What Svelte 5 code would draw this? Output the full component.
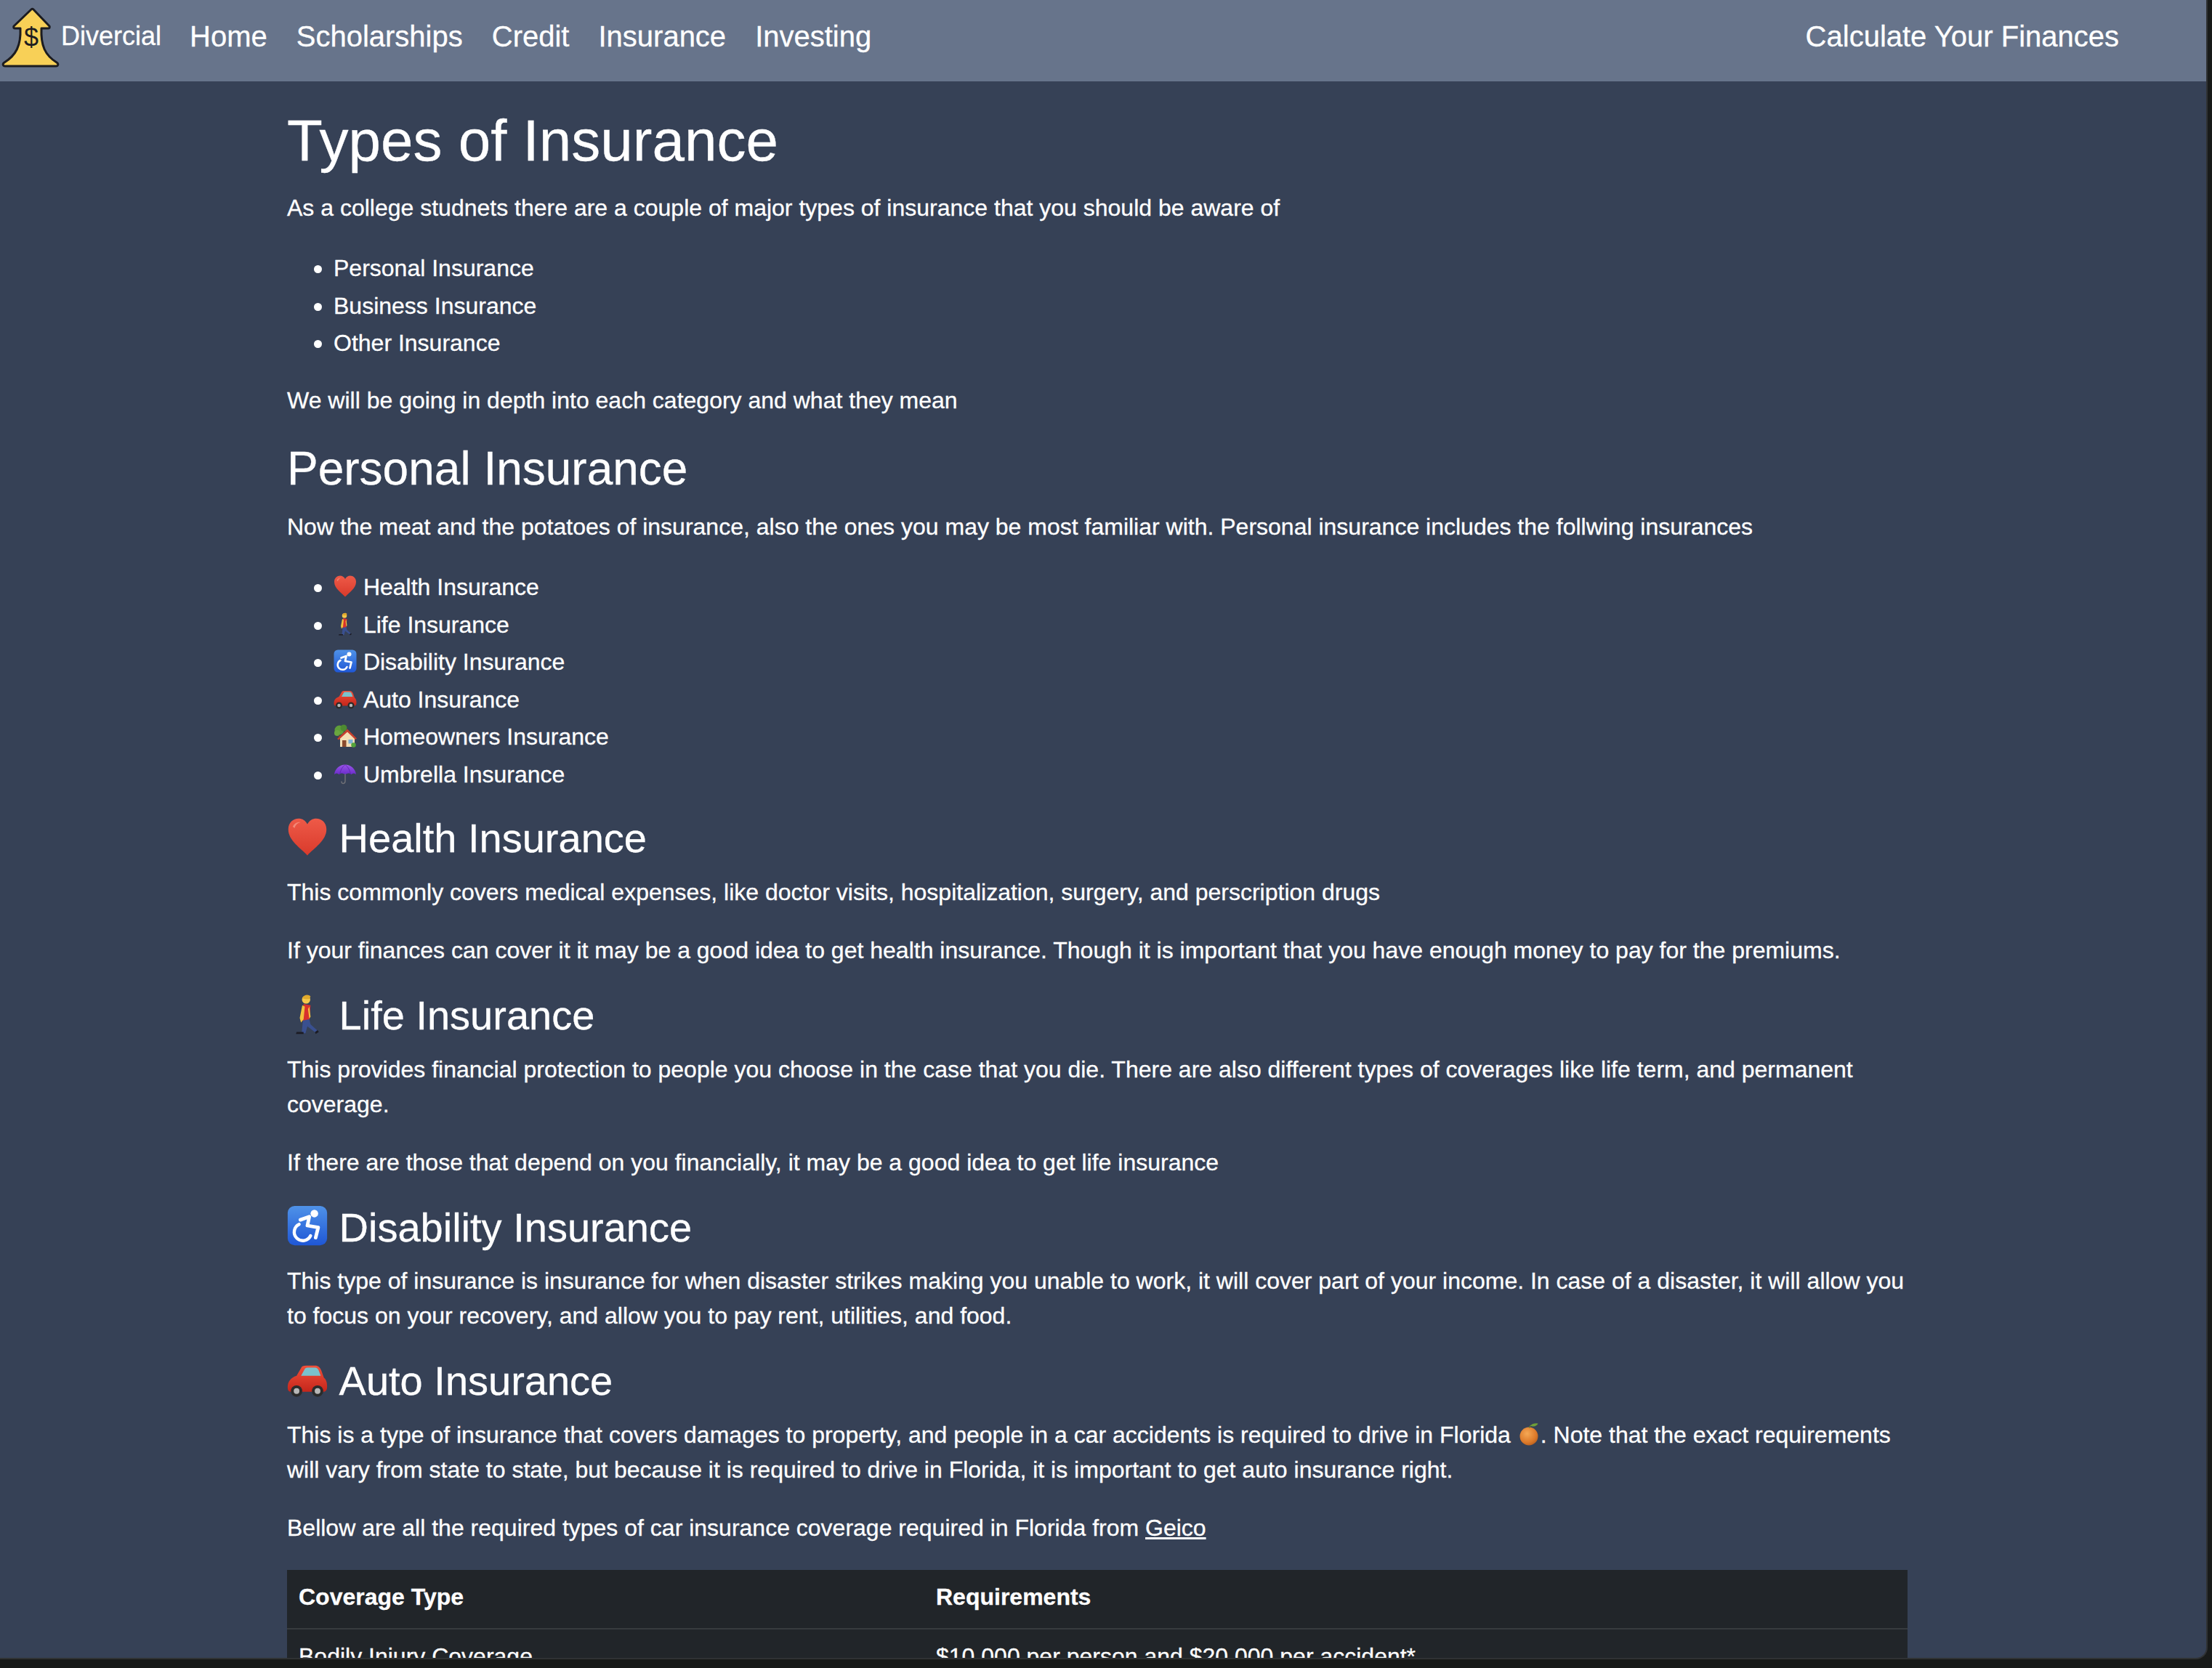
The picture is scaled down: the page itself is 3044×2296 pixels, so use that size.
<script lang="ts">
  const navLinks = ['Home', 'Scholarships', 'Credit', 'Insurance', 'Investing'];
  const overviewTypes = ['Personal Insurance', 'Business Insurance', 'Other Insurance'];
  const personalTypes = [
    { emoji: 'heart', label: 'Health Insurance' },
    { emoji: 'walker', label: 'Life Insurance' },
    { emoji: 'wheelchair', label: 'Disability Insurance' },
    { emoji: 'car', label: 'Auto Insurance' },
    { emoji: 'house', label: 'Homeowners Insurance' },
    { emoji: 'umbrella', label: 'Umbrella Insurance' }
  ];
</script>

{#snippet emoji(kind: string)}
  <svg class="emoji" class:orange={kind === 'orange'} viewBox="0 0 64 64" aria-hidden="true">
    {#if kind === 'heart'}
      <path d="M32 61C22 50 2 38 2 20 2 9 10 3 18 3c6 0 11 3 14 9 3-6 8-9 14-9 8 0 16 6 16 17 0 18-20 30-30 41z" fill="url(#heartFill)" />
      <path d="M9 16c2-5 7-8 12-7-5 1-8 4-9 9z" fill="#f7a08f" opacity="0.7" />
    {:else if kind === 'walker'}
      <path d="M26 16l-3 24 4 5 8-2 2-25z" fill="#d8312c" />
      <path d="M24 18l-4 20 2 7 4-5 2-20zM35 20l2 16-2 3-2-15z" fill="#f2c23e" />
      <path d="M25 42l10-2 2 8 11 10-3 3-13-10-3 11h-6z" fill="#3a5090" />
      <path d="M15 60h11v3H14zM44 60l4-3 2 3-5 3z" fill="#1c1c24" />
      <circle cx="30" cy="9" r="6.500" fill="#f6c94a" />
      <path d="M24 7c2-6 10-7 13-3l-2 4c-4 1-7 0-11-1z" fill="#e0a92c" />
    {:else if kind === 'wheelchair'}
      <rect x="1" y="1" width="62" height="62" rx="11" fill="url(#chairFill)" />
      <circle cx="43" cy="13" r="6" fill="#fff" />
      <path d="M21 23l14-5-3 14 17 3-4 16" fill="none" stroke="#fff" stroke-width="5.5" stroke-linecap="round" stroke-linejoin="round" />
      <path d="M19 30a13.500 13.500 0 1 0 18 18" fill="none" stroke="#fff" stroke-width="5" stroke-linecap="round" />
    {:else if kind === 'car'}
      <path d="M15 26l7-12c1-3 4-4 8-4h14c5 0 8 3 10 8l4 11c4 3 5 8 5 14 0 5-2 8-6 8H6c-4 0-5-3-5-7 0-9 5-15 14-18z" fill="url(#carFill)" />
      <path d="M22 26l6-11c1-1 2-2 4-2h12c3 0 5 2 6 5l3 8z" fill="#7bc2cc" />
      <circle cx="15" cy="50" r="9" fill="#2b2b2b" />
      <circle cx="15" cy="50" r="4.500" fill="#b7b7b7" />
      <circle cx="48" cy="50" r="9" fill="#2b2b2b" />
      <circle cx="48" cy="50" r="4.500" fill="#b7b7b7" />
    {:else if kind === 'house'}
      <circle cx="16" cy="16" r="13" fill="#5f9e3a" />
      <circle cx="28" cy="10" r="9" fill="#4e8a31" />
      <circle cx="10" cy="24" r="8" fill="#6aa83f" />
      <path d="M15 27l5 14h-6z" fill="#7a5230" />
      <path d="M18 36l20-16 20 16v26H18z" fill="#f5dfb5" />
      <path d="M10 40l28-27 26 26-4 3-22-21-24 22z" fill="#c8402d" />
      <rect x="24" y="44" width="11" height="18" fill="#8a4b2e" />
      <rect x="41" y="42" width="12" height="11" fill="#7fb2d8" />
      <circle cx="55" cy="57" r="6.500" fill="#52a33b" />
    {:else if kind === 'umbrella'}
      <path d="M32 10v42c0 9-10 9-10 2" fill="none" stroke="#6f7076" stroke-width="3" stroke-linecap="round" />
      <path d="M2 34C4 18 17 7 32 7s28 11 30 27c-4-4-9-4-13 0-4-4-10-4-17 0-7-4-13-4-17 0-4-4-9-4-13 0z" fill="url(#umbrellaFill)" />
      <path d="M32 7c-8 6-13 15-15 27M32 7c8 6 13 15 15 27" fill="none" stroke="#5a21a8" stroke-width="1.5" />
    {:else if kind === 'orange'}
      <circle cx="32" cy="38" r="25" fill="url(#orangeFill)" />
      <path d="M33 15c1-3 2-5 4-7" fill="none" stroke="#5e7d2c" stroke-width="2.5" />
      <path d="M35 9c6-6 14-8 22-6-3 7-12 10-22 6z" fill="#6f9f38" />
    {/if}
  </svg>
{/snippet}

<svg class="defs" aria-hidden="true">
  <defs>
    <linearGradient id="heartFill" x1="0" y1="0" x2="0" y2="1">
      <stop offset="0" stop-color="#ee5a48" />
      <stop offset="1" stop-color="#d93a2b" />
    </linearGradient>
    <linearGradient id="chairFill" x1="0" y1="0" x2="0" y2="1">
      <stop offset="0" stop-color="#4f92e8" />
      <stop offset="1" stop-color="#1f57d6" />
    </linearGradient>
    <linearGradient id="carFill" x1="0" y1="0" x2="0" y2="1">
      <stop offset="0" stop-color="#f0503a" />
      <stop offset="1" stop-color="#c5261b" />
    </linearGradient>
    <linearGradient id="umbrellaFill" x1="0" y1="0" x2="0" y2="1">
      <stop offset="0" stop-color="#9a55ea" />
      <stop offset="1" stop-color="#6a2cc8" />
    </linearGradient>
    <radialGradient id="orangeFill" cx="0.4" cy="0.35" r="0.7">
      <stop offset="0" stop-color="#f5a855" />
      <stop offset="0.7" stop-color="#dd7a2a" />
      <stop offset="1" stop-color="#b9601f" />
    </radialGradient>
  </defs>
</svg>

<div class="frame">
  <nav class="navbar">
    <a class="brand" href="#home">
      <svg class="logo" viewBox="0 2 84 96" aria-hidden="true">
        <path
          d="M43 13L19 36c-1 2 0 3 2 3h7c1 24-6 37-22 47-3 2-2 5 1 5h70c3 0 4-3 1-5C62 76 56 63 57 39h9c2 0 3-1 2-3L46 13c-1-1-2-1-3 0z"
          fill="#f8d057"
          stroke="#1c1c20"
          stroke-width="3"
          stroke-linejoin="round"
        />
        <text x="43" y="64" text-anchor="middle">$</text>
      </svg>
      Divercial
    </a>
    <div class="links">
      {#each navLinks as link}
        <a href="#{link.toLowerCase()}">{link}</a>
      {/each}
    </div>
    <a class="calc" href="#calculate">Calculate Your Finances</a>
  </nav>

  <main class="content">
    <h1>Types of Insurance</h1>
    <p>As a college studnets there are a couple of major types of insurance that you should be aware of</p>
    <ul>
      {#each overviewTypes as item}
        <li>{item}</li>
      {/each}
    </ul>
    <p>We will be going in depth into each category and what they mean</p>

    <h2>Personal Insurance</h2>
    <p>Now the meat and the potatoes of insurance, also the ones you may be most familiar with. Personal insurance includes the follwing insurances</p>
    <ul>
      {#each personalTypes as item}
        <li>{@render emoji(item.emoji)}{item.label}</li>
      {/each}
    </ul>

    <h3>{@render emoji('heart')}Health Insurance</h3>
    <p>This commonly covers medical expenses, like doctor visits, hospitalization, surgery, and perscription drugs</p>
    <p>If your finances can cover it it may be a good idea to get health insurance. Though it is important that you have enough money to pay for the premiums.</p>

    <h3>{@render emoji('walker')}Life Insurance</h3>
    <p>This provides financial protection to people you choose in the case that you die. There are also different types of coverages like life term, and permanent coverage.</p>
    <p>If there are those that depend on you financially, it may be a good idea to get life insurance</p>

    <h3>{@render emoji('wheelchair')}Disability Insurance</h3>
    <p>This type of insurance is insurance for when disaster strikes making you unable to work, it will cover part of your income. In case of a disaster, it will allow you to focus on your recovery, and allow you to pay rent, utilities, and food.</p>

    <h3>{@render emoji('car')}Auto Insurance</h3>
    <p>This is a type of insurance that covers damages to property, and people in a car accidents is required to drive in Florida {@render emoji('orange')}. Note that the exact requirements will vary from state to state, but because it is required to drive in Florida, it is important to get auto insurance right.</p>
    <p>Bellow are all the required types of car insurance coverage required in Florida from <a class="inline" href="#geico">Geico</a></p>

    <table>
      <thead>
        <tr>
          <th class="first">Coverage Type</th>
          <th>Requirements</th>
        </tr>
      </thead>
      <tbody>
        <tr>
          <td>Bodily Injury Coverage</td>
          <td>$10,000 per person and $20,000 per accident*</td>
        </tr>
      </tbody>
    </table>
  </main>
</div>

<style>
  :global(body) {
    margin: 0;
    background: #181a19;
  }

  .defs {
    position: absolute;
    width: 0;
    height: 0;
  }

  .frame {
    box-sizing: border-box;
    width: 3038px;
    height: 2284px;
    overflow: hidden;
    background: #364156;
    border-right: 2px solid #303234;
    border-bottom: 2px solid #303234;
    border-bottom-right-radius: 16px;
    color: #fff;
    font-family: 'Liberation Sans', Arial, sans-serif;
    font-size: 32px;
    line-height: 48px;
    -webkit-text-stroke: 0.3px #fff;
  }

  a {
    color: #fff;
    text-decoration: none;
  }

  .navbar {
    box-sizing: border-box;
    display: flex;
    align-items: center;
    height: 112px;
    padding-right: 120px;
    padding-bottom: 12px;
    background: #67748b;
    font-size: 40px;
    line-height: 60px;
  }

  .brand {
    display: flex;
    align-items: center;
    margin-right: 39px;
    font-size: 36px;
  }

  .logo {
    display: block;
    width: 84px;
    height: 96px;
    overflow: visible;
  }

  .logo text {
    font-family: 'Liberation Sans', Arial, sans-serif;
    font-size: 36px;
    fill: #1c1c20;
    -webkit-text-stroke: 0;
  }

  .links {
    display: flex;
    gap: 40px;
  }

  .calc {
    margin-left: auto;
  }

  .content {
    width: 2230px;
    margin-left: 395px;
    padding-top: 34px;
  }

  h1,
  h2,
  h3 {
    margin: 0 0 16.5px;
    font-weight: 400;
    line-height: 1.2;
  }

  h1 {
    margin-bottom: 20px;
    font-size: 80px;
  }

  h2 {
    margin-bottom: 18px;
    font-size: 64px;
  }

  h3 {
    font-size: 56px;
  }

  p {
    margin: 0 0 32px;
  }

  ul {
    margin: 0 0 28px;
    padding: 2px 0 0 64px;
    list-style: none;
  }

  li {
    position: relative;
    line-height: 51.5px;
  }

  li::before {
    content: '';
    position: absolute;
    left: -27px;
    top: 21px;
    width: 11px;
    height: 11px;
    border-radius: 50%;
    background: #fff;
  }

  .emoji {
    width: 1em;
    height: 1em;
    margin-right: 0.278em;
    vertical-align: -0.12em;
  }

  .emoji.orange {
    margin-right: 0;
  }

  .inline {
    text-decoration: underline;
  }

  table {
    width: 100%;
    margin-top: 34px;
    border-collapse: collapse;
    background: #212529;
  }

  th,
  td {
    padding: 13px 16px 19px;
    text-align: left;
    border-bottom: 2px solid #373b3e;
  }

  th.first {
    width: 845px;
  }
</style>
